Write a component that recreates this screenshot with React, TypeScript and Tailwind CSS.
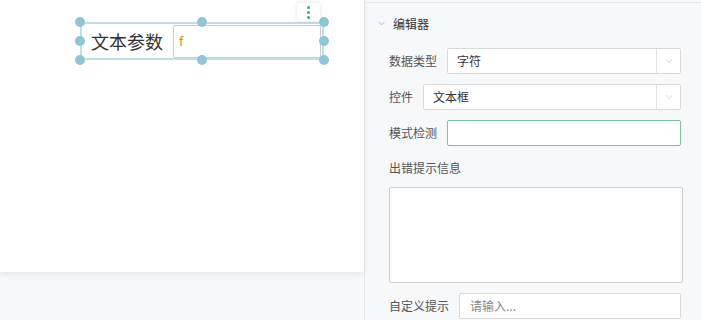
import { ChevronDown } from "lucide-react";

const cjk = { fontFamily: '"Noto Sans CJK SC", "Noto Sans", sans-serif' };

function Handle({ x, y }: { x: number; y: number }) {
  return (
    <div
      className="absolute w-[10px] h-[10px] rounded-full bg-[#8fc5d6]"
      style={{ left: x - 5, top: y - 5 }}
    />
  );
}

function Select({ value }: { value: string }) {
  return (
    <div className="flex-1 h-[26px] flex items-center bg-white border border-[#d9d9d9] rounded-[2px]">
      <div className="flex-1 px-[9px] text-[12px] text-[#333]">{value}</div>
      <div className="w-[24px] h-full border-l border-[#e3e3e3] flex items-center justify-center">
        <ChevronDown size={12} strokeWidth={1.2} className="text-[#bbb]" />
      </div>
    </div>
  );
}

export default function App() {
  return (
    <div className="w-[701px] h-[320px] flex bg-[#f7f8fa] overflow-hidden" style={cjk}>
      {/* canvas */}
      <div className="w-[364px] flex flex-col">
        <div className="h-[272px] bg-white shadow-[0_2px_6px_rgba(0,0,0,0.08)] relative">
          {/* widget */}
          <div className="absolute left-[80px] top-[22px] w-[244px] h-[38px] border-2 border-[#bfdfe8] flex items-center">
            <div className="pl-[9px] w-[91px] text-[18px] text-[#333] leading-none">文本参数</div>
            <div className="flex-1 h-[33px] mr-[1px] bg-white border border-[#cccccc] rounded-[2px] flex items-center px-[5px] text-[13px] text-[#d98a1f]">
              f
            </div>
          </div>
          <Handle x={80} y={22} />
          <Handle x={202} y={22} />
          <Handle x={324} y={22} />
          <Handle x={80} y={41} />
          <Handle x={324} y={41} />
          <Handle x={80} y={60} />
          <Handle x={202} y={60} />
          <Handle x={324} y={60} />
          {/* more menu */}
          <div className="absolute left-[297px] top-[3px] w-[23px] h-[18px] bg-white rounded-[3px] shadow-[0_0_4px_rgba(0,0,0,0.12)] flex flex-col items-center justify-center gap-[2px]">
            <span className="w-[3px] h-[3px] rounded-full bg-[#2fb36b]" />
            <span className="w-[3px] h-[3px] rounded-full bg-[#2fb36b]" />
            <span className="w-[3px] h-[3px] rounded-full bg-[#2fb36b]" />
          </div>
        </div>
      </div>

      {/* property panel */}
      <div className="flex-1 border-l border-[#e6e8eb] flex flex-col">
        <div className="h-[3px] border-b border-[#e6e8eb]" />
        <div className="flex items-center h-[36px] pt-[5px] pl-[11px] gap-[6px] text-[12px] text-[#333]">
          <ChevronDown size={11} strokeWidth={1.5} className="text-[#999]" />
          <span>编辑器</span>
        </div>
        <div className="pl-[24px] pr-[20px] flex flex-col">
          <div className="flex items-center gap-[10px] mt-[9px]">
            <span className="text-[12px] text-[#555] w-[48px]">数据类型</span>
            <Select value="字符" />
          </div>
          <div className="flex items-center gap-[10px] mt-[10px]">
            <span className="text-[12px] text-[#555] w-[24px]">控件</span>
            <Select value="文本框" />
          </div>
          <div className="flex items-center gap-[10px] mt-[10px]">
            <span className="text-[12px] text-[#555] w-[48px]">模式检测</span>
            <div className="flex-1 h-[26px] bg-white border border-[#7cc39f] rounded-[2px]" />
          </div>
          <div className="text-[12px] text-[#555] mt-[13px] leading-[18px]">出错提示信息</div>
          <div className="mt-[10px] h-[96px] mr-[-2px] bg-white border border-[#d2d2d2] rounded-[2px]" />
          <div className="flex items-center gap-[10px] mt-[10px]">
            <span className="text-[12px] text-[#555] w-[60px]">自定义提示</span>
            <div className="flex-1 h-[26px] bg-white border border-[#d9d9d9] rounded-[2px] flex items-center px-[10px] text-[12px] text-[#888]">
              请输入...
            </div>
          </div>
        </div>
      </div>
    </div>
  );
}
